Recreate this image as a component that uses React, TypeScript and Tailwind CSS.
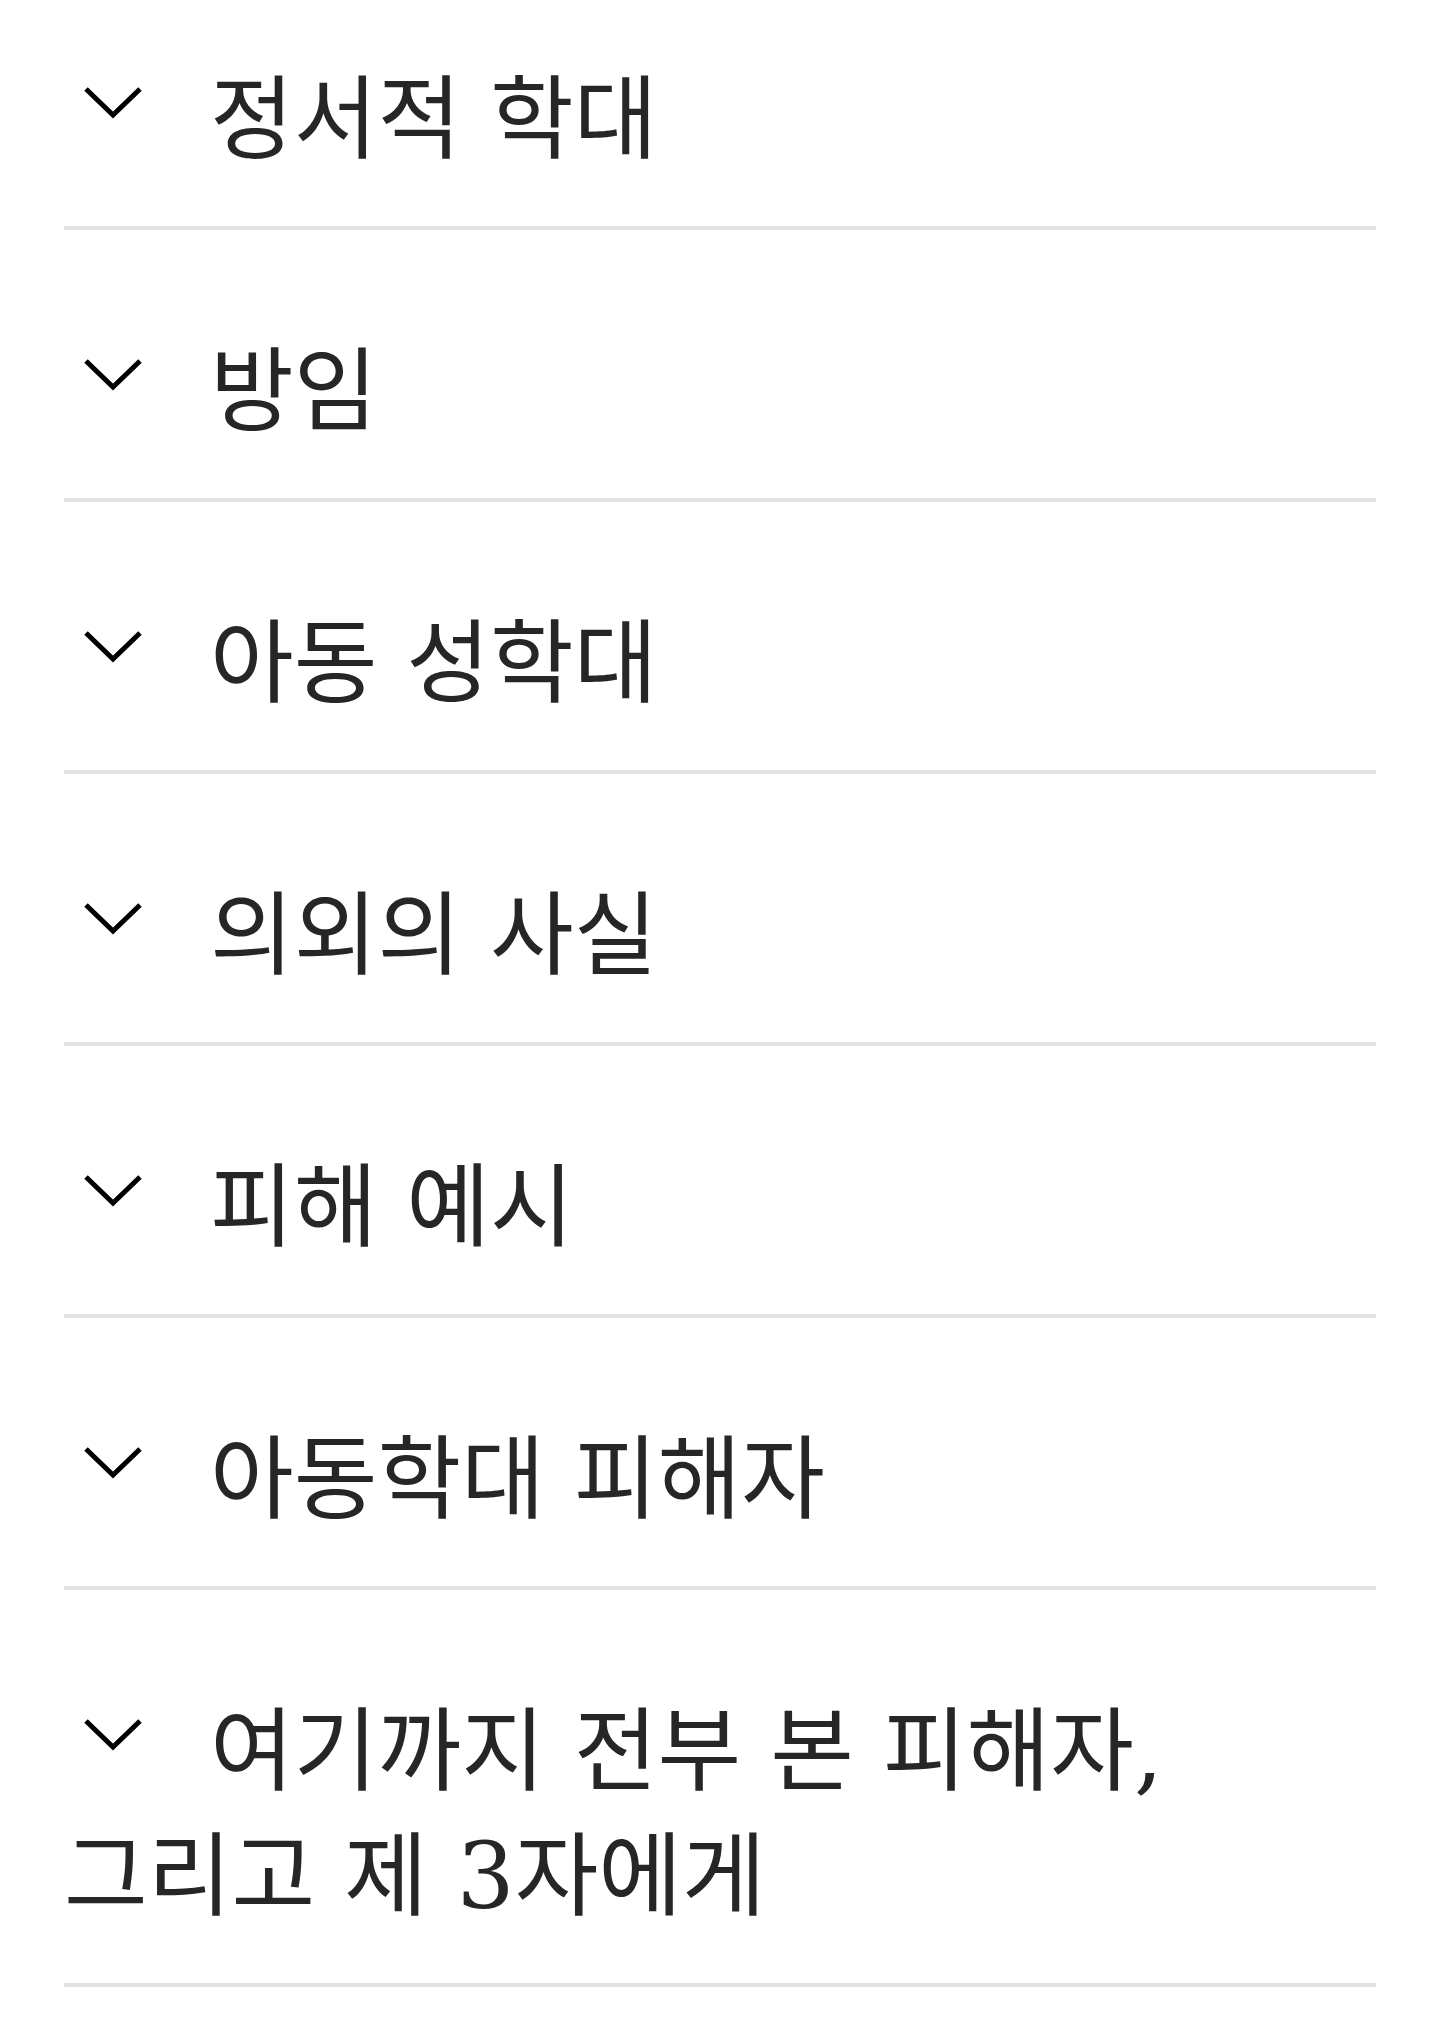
import React from 'react';

const items = [
  '정서적 학대',
  '방임',
  '아동 성학대',
  '의외의 사실',
  '피해 예시',
  '아동학대 피해자',
  '여기까지 전부 본 피해자, 그리고 제 3자에게',
];

const Chevron: React.FC = () => (
  <svg
    width="58"
    height="32"
    viewBox="0 0 58 32"
    className="inline-block align-top mt-[30px] ml-[20px] mr-[68px]"
    aria-hidden="true"
  >
    <polyline points="2,2 29,28 56,2" fill="none" stroke="#000" strokeWidth="5" strokeLinejoin="miter" />
  </svg>
);

export default function App() {
  return (
    <div className="min-h-[2042px] bg-white px-[64px] font-['DejaVu_Serif','Noto_Sans_CJK_KR',serif] text-[#262626]">
      {items.map((label, i) => (
        <div
          key={label}
          className={`border-b-4 border-[#e2e3e5] pb-[44px] ${i === 0 ? 'pt-[57px]' : 'pt-[99px]'}`}
        >
          <p className="text-[91px] leading-[125px] break-keep cursor-pointer">
            <Chevron />
            {label}
          </p>
        </div>
      ))}
    </div>
  );
}
